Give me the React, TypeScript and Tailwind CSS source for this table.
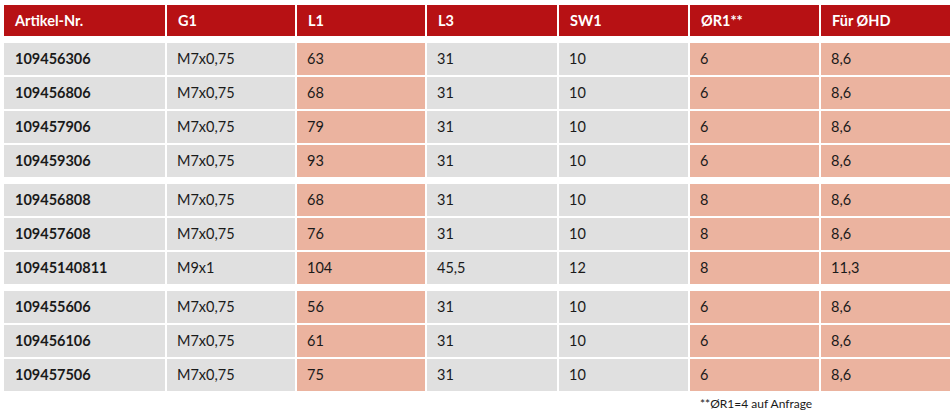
import React from 'react';

// Artikeltabelle: Gewindeeinsätze mit Abmessungen
type Row = [string, string, string, string, string, string, string];

const groups: Row[][] = [
  [
    ['109456306', 'M7x0,75', '63', '31', '10', '6', '8,6'],
    ['109456806', 'M7x0,75', '68', '31', '10', '6', '8,6'],
    ['109457906', 'M7x0,75', '79', '31', '10', '6', '8,6'],
    ['109459306', 'M7x0,75', '93', '31', '10', '6', '8,6'],
  ],
  [
    ['109456808', 'M7x0,75', '68', '31', '10', '8', '8,6'],
    ['109457608', 'M7x0,75', '76', '31', '10', '8', '8,6'],
    ['10945140811', 'M9x1', '104', '45,5', '12', '8', '11,3'],
  ],
  [
    ['109455606', 'M7x0,75', '56', '31', '10', '6', '8,6'],
    ['109456106', 'M7x0,75', '61', '31', '10', '6', '8,6'],
    ['109457506', 'M7x0,75', '75', '31', '10', '6', '8,6'],
  ],
];

const headers = ['Artikel-Nr.', 'G1', 'L1', 'L3', 'SW1', 'ØR1**', 'Für ØHD'];

// Spalten mit Lachsfarbe hervorgehoben
const salmon = [false, false, true, false, false, true, true];

const gridCols = 'grid grid-cols-[161px_128px_128px_130px_129px_129px_129px] gap-x-[2px]';

export default function App() {
  return (
    <div
      className="w-[952px] h-[417px] bg-white pl-[4px] pt-[5px] text-[#1a1a1a]"
      style={{ fontFamily: 'Lato, "Liberation Sans", sans-serif' }}
    >
      {/* Kopfzeile */}
      <div className={`${gridCols} h-[31px]`}>
        {headers.map((h) => (
          <div key={h} className="bg-[#b71114] text-white font-bold text-[14.5px] flex items-center pl-[11px]">
            {h}
          </div>
        ))}
      </div>

      {groups.map((group, gi) => (
        <div key={gi} className="mt-[7px] flex flex-col gap-[2px]">
          {group.map((row) => (
            <div key={row[0]} className={`${gridCols} h-[32px]`}>
              {row.map((cell, ci) => (
                <div
                  key={ci}
                  className={`flex items-center pl-[10px] text-[14.5px] ${
                    salmon[ci] ? 'bg-[#ebb39f]' : 'bg-[#e0e0e0]'
                  } ${ci === 0 ? 'font-bold pl-[11px]' : ''}`}
                >
                  {cell}
                </div>
              ))}
            </div>
          ))}
        </div>
      ))}

      <div className={`${gridCols} mt-[6px]`}>
        <div className="col-start-6 col-span-2 pl-[10px] text-[12px] leading-[14px]">**ØR1=4 auf Anfrage</div>
      </div>
    </div>
  );
}
